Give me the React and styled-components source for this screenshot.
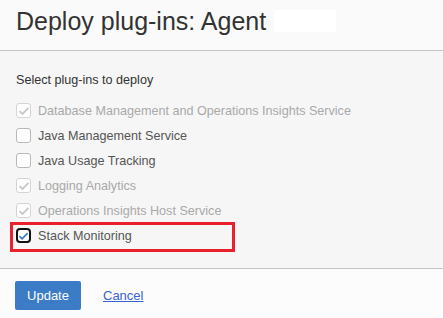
import React from 'react';
import styled, {createGlobalStyle} from 'styled-components';

const GlobalStyle = createGlobalStyle`
   html, body {
      margin: 0;
      padding: 0;
      background: #f6f6f6;
   }
   body {
      font-family: "Liberation Sans", Arial, sans-serif;
   }
`;

const plugins = [
   {name: 'Database Management and Operations Insights Service', checked: true, disabled: true},
   {name: 'Java Management Service', checked: false, disabled: false},
   {name: 'Java Usage Tracking', checked: false, disabled: false},
   {name: 'Logging Analytics', checked: true, disabled: true},
   {name: 'Operations Insights Host Service', checked: true, disabled: true},
   {name: 'Stack Monitoring', checked: true, disabled: false, focused: true},
];

const CheckBox = ({checked, disabled, focused}) => (
   <Box disabled={disabled} focused={focused}>
      {checked && (
         <svg width="12" height="10" viewBox="0 0 12 10">
            <path
               d="M1.5 5.2 L4.5 8 L10.5 1.8"
               fill="none"
               stroke={disabled ? '#c8c8c8' : '#3a78c9'}
               strokeWidth="1.8"
            />
         </svg>
      )}
   </Box>
);

const App = () => {
   return (
      <>
         <GlobalStyle />
         <Dialog>
            <Header>
               <Title>Deploy plug-ins: Agent</Title>
               <Redacted />
            </Header>
            <Body>
               <Label>Select plug-ins to deploy</Label>
               <List>
                  {plugins.map(p => (
                     <Row key={p.name} highlight={p.focused}>
                        <CheckBox checked={p.checked} disabled={p.disabled} focused={p.focused} />
                        <ItemText disabled={p.disabled}>{p.name}</ItemText>
                     </Row>
                  ))}
               </List>
            </Body>
            <Footer>
               <Button>Update</Button>
               <CancelLink href="#">Cancel</CancelLink>
            </Footer>
         </Dialog>
      </>
   );
}

const Dialog = styled.div`
   width: 443px;
   height: 318px;
   display: flex;
   flex-direction: column;
   background: #f6f6f6;
`;

const Header = styled.header`
   height: 51px;
   box-sizing: border-box;
   padding: 0 0 0 16px;
   display: flex;
   align-items: center;
   gap: 8px;
   background: #fafafa;
   border-bottom: 1px solid #c4c4c4;
`;

const Title = styled.h1`
   margin: 0;
   margin-top: -8px;
   font-size: 25px;
   font-weight: normal;
   color: #333;
`;

const Redacted = styled.div`
   width: 62px;
   height: 22px;
   margin-top: -8px;
   background: #fff;
`;

const Body = styled.section`
   flex: 1;
   padding: 21px 0 0 16px;
`;

const Label = styled.div`
   font-size: 12.6px;
   color: #333;
   line-height: 16px;
   margin-bottom: 10px;
`;

const List = styled.div`
   display: flex;
   flex-direction: column;
`;

const Row = styled.div`
   position: relative;
   display: flex;
   align-items: center;
   height: 25px;
   &::after {
      content: '';
      display: ${props => props.highlight ? 'block' : 'none'};
      position: absolute;
      left: -6px;
      top: -1px;
      width: 225px;
      height: 30px;
      box-sizing: border-box;
      border: 3px solid #e8212c;
   }
`;

const Box = styled.span`
   width: 15px;
   height: 15px;
   box-sizing: border-box;
   display: flex;
   align-items: center;
   justify-content: center;
   border-radius: ${props => props.focused ? '4px' : '3px'};
   background: #fff;
   border: ${props => props.focused ? '2px solid #111' : props.disabled ? '1px solid #d4d4d4' : '1px solid #b8b8b8'};
   margin-right: 7px;
`;

const ItemText = styled.span`
   font-size: 12.6px;
   color: ${props => props.disabled ? '#a9a9a9' : '#555'};
`;

const Footer = styled.footer`
   height: 50px;
   box-sizing: border-box;
   border-top: 1px solid #c4c4c4;
   background: #fcfcfc;
   display: flex;
   align-items: center;
   padding: 4px 0 0 15px;
   gap: 22px;
`;

const Button = styled.button`
   width: 66px;
   height: 29px;
   border: none;
   border-radius: 2px;
   background: #3c7bc6;
   color: #fff;
   font-family: inherit;
   font-size: 13px;
`;

const CancelLink = styled.a`
   font-size: 13px;
   color: #3b62d1;
   text-decoration: underline;
`;

export default App;
